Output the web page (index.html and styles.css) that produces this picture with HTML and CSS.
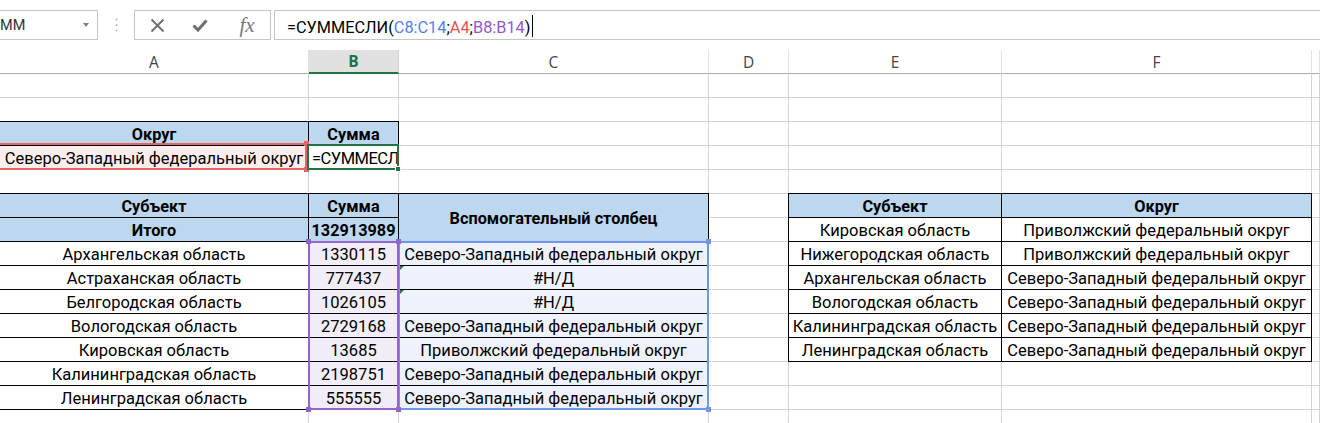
FILE: index.html
```html
<!DOCTYPE html>
<html lang="ru">
<head>
<meta charset="utf-8">
<title>СУММЕСЛИ</title>
<link rel="stylesheet" href="styles.css">
</head>
<body>
<div class="fbar">
  <div class="namebox"><span class="nb-text">ММ</span><span class="nb-arrow"></span></div>
  <div class="grip"><svg width="3" height="14" viewBox="0 0 3 14"><circle cx="1.5" cy="1.5" r="1" fill="#b4b4b4"/><circle cx="1.5" cy="7" r="1" fill="#b4b4b4"/><circle cx="1.5" cy="12.5" r="1" fill="#b4b4b4"/></svg></div>
  <div class="btns">
    <span class="btn b-x"><svg width="15" height="15" viewBox="0 0 15 15"><path d="M1.5 1.5L13.5 13.5M13.5 1.5L1.5 13.5" stroke="#707070" stroke-width="2" fill="none"/></svg></span>
    <span class="btn b-ok"><svg width="16" height="13" viewBox="0 0 16 13"><path d="M1.5 6.5L6 11L14.5 1.5" stroke="#6e6e6e" stroke-width="3" fill="none"/></svg></span>
    <span class="btn b-fx">fx</span>
  </div>
  <div class="formula"><span class="ftext">=СУММЕСЛИ(<span class="r-blue">C8:C14</span>;<span class="r-red">A4</span>;<span class="r-purple">B8:B14</span>)</span><span class="caret"></span></div>
</div>

<div class="sheetwrap">
  <div class="sheet">
    <div class="c ch">A</div><div class="c ch sel">B</div><div class="c ch">C</div><div class="c ch">D</div><div class="c ch">E</div><div class="c ch">F</div><div class="c ch"></div>

    <div class="c"></div><div class="c"></div><div class="c"></div><div class="c"></div><div class="c"></div><div class="c"></div><div class="c"></div>
    <div class="c"></div><div class="c"></div><div class="c"></div><div class="c"></div><div class="c"></div><div class="c"></div><div class="c"></div>

    <div class="c t th top">Округ</div><div class="c t th top">Сумма</div><div class="c"></div><div class="c"></div><div class="c"></div><div class="c"></div><div class="c"></div>

    <div class="c t fr">Северо-Западный федеральный округ</div>
    <div class="c t edit"><span class="etext">=СУММЕСЛ</span></div>
    <div class="c"></div><div class="c"></div><div class="c"></div><div class="c"></div><div class="c"></div>

    <div class="c"></div><div class="c"></div><div class="c"></div><div class="c"></div><div class="c"></div><div class="c"></div><div class="c"></div>

    <div class="c t th top">Субъект</div><div class="c t th top">Сумма</div><div class="c t th top span2">Вспомогательный столбец</div><div class="c"></div><div class="c t th top lft">Субъект</div><div class="c t th top">Округ</div><div class="c"></div>

    <div class="c t th">Итого</div><div class="c t th">132913989</div><div class="c"></div><div class="c t lft">Кировская область</div><div class="c t">Приволжский федеральный округ</div><div class="c"></div>

    <div class="c t">Архангельская область</div><div class="c t fp">1330115</div><div class="c t fb">Северо-Западный федеральный округ</div><div class="c"></div><div class="c t lft">Нижегородская область</div><div class="c t">Приволжский федеральный округ</div><div class="c"></div>

    <div class="c t">Астраханская область</div><div class="c t fp">777437</div><div class="c t fb err">#Н/Д</div><div class="c"></div><div class="c t lft">Архангельская область</div><div class="c t">Северо-Западный федеральный округ</div><div class="c"></div>

    <div class="c t">Белгородская область</div><div class="c t fp">1026105</div><div class="c t fb err">#Н/Д</div><div class="c"></div><div class="c t lft">Вологодская область</div><div class="c t">Северо-Западный федеральный округ</div><div class="c"></div>

    <div class="c t">Вологодская область</div><div class="c t fp">2729168</div><div class="c t fb">Северо-Западный федеральный округ</div><div class="c"></div><div class="c t lft">Калининградская область</div><div class="c t">Северо-Западный федеральный округ</div><div class="c"></div>

    <div class="c t">Кировская область</div><div class="c t fp">13685</div><div class="c t fb">Приволжский федеральный округ</div><div class="c"></div><div class="c t lft">Ленинградская область</div><div class="c t">Северо-Западный федеральный округ</div><div class="c"></div>

    <div class="c t">Калининградская область</div><div class="c t fp">2198751</div><div class="c t fb">Северо-Западный федеральный округ</div><div class="c"></div><div class="c"></div><div class="c"></div><div class="c"></div>

    <div class="c t">Ленинградская область</div><div class="c t fp">555555</div><div class="c t fb">Северо-Западный федеральный округ</div><div class="c"></div><div class="c"></div><div class="c"></div><div class="c"></div>

    <div class="c"></div><div class="c"></div><div class="c"></div><div class="c"></div><div class="c"></div><div class="c"></div><div class="c"></div>
  </div>

  <div class="marks">
    <div class="mk mk-red"><i class="h tl"></i><i class="h tr"></i><i class="h bl"></i><i class="h br"></i></div>
    <div class="mk mk-green"><i class="gh"></i></div>
    <div class="mk mk-blue"><i class="h tl"></i><i class="h tr"></i><i class="h bl"></i><i class="h br"></i></div>
    <div class="mk mk-purple"><i class="h tl"></i><i class="h tr"></i><i class="h bl"></i><i class="h br"></i></div>
  </div>
</div>
</body>
</html>
```

FILE: styles.css
```css
* { box-sizing: border-box; }
html, body { margin: 0; padding: 0; }
body {
  width: 1320px;
  height: 423px;
  overflow: hidden;
  background: #fff;
  color: #000;
  font-family: Roboto, "Liberation Sans", sans-serif;
}

/* ---------- formula bar ---------- */
.fbar {
  display: flex;
  height: 30px;
  margin-top: 10px;
}
.namebox {
  width: 100px;
  margin-left: -2px;
  border: 1px solid #c6c6c6;
  display: flex;
  align-items: center;
  justify-content: space-between;
  padding: 0 8px 0 1px;
  font-size: 14.5px;
  color: #333;
}
.nb-arrow {
  width: 0;
  height: 0;
  border-left: 3.5px solid transparent;
  border-right: 3.5px solid transparent;
  border-top: 4px solid #808080;
}
.grip {
  width: 36px;
  display: flex;
  align-items: center;
  justify-content: center;
  padding-left: 1px;
}
.btns {
  width: 137px;
  border: 1px solid #c6c6c6;
  display: flex;
}
.btn {
  display: flex;
  align-items: center;
  justify-content: center;
}
.b-x { width: 44px; }
.b-ok { width: 42px; }
.b-fx {
  width: 49px;
  padding-left: 3px;
  font-family: "Liberation Serif", "DejaVu Serif", serif;
  font-style: italic;
  font-size: 21px;
  color: #7a7a7a;
}
.formula {
  flex: 1;
  margin-left: 3px;
  margin-right: -2px;
  border: 1px solid #c6c6c6;
  display: flex;
  align-items: center;
  padding: 4px 0 0 12px;
  font-size: 16.3px;
  white-space: nowrap;
}
.r-blue { color: #4f82ea; }
.r-red { color: #ea4f4f; }
.r-purple { color: #9457cc; }
.caret {
  width: 1px;
  height: 22px;
  margin-left: 2px;
  margin-top: -2px;
  background: #000;
}

/* ---------- sheet ---------- */
.sheetwrap {
  display: grid;
  margin-top: 10px;
}
.sheet,
.marks {
  grid-area: 1 / 1;
  display: grid;
  grid-template-columns: 309px 90px 310px 80px 213px 310px 1fr;
  grid-template-rows: repeat(16, 24px);
}
.marks { pointer-events: none; }

.c {
  position: relative;
  display: flex;
  align-items: center;
  justify-content: center;
  padding-top: 1px;
  border-right: 1px solid #d4d4d4;
  border-bottom: 1px solid #d4d4d4;
  white-space: nowrap;
  overflow: hidden;
  font-size: 16.5px;
}
.ch {
  font-family: "Open Sans", "Noto Sans", sans-serif;
  font-size: 15.5px;
  color: #444;
  padding-top: 0;
  border-right-color: #e1e1e1;
  border-bottom-color: #ababab;
}
.ch.sel {
  background: #e1e1e1;
  color: #217346;
  font-weight: 700;
  border-bottom: 2px solid #217346;
  border-right-color: #d4d4d4;
}

.t {
  border-right-color: #000;
  border-bottom-color: #000;
}
.th {
  background: #bdd7ee;
  font-weight: 700;
  font-size: 16.3px;
}
.top { box-shadow: 0 -1px 0 #000; }
.lft { box-shadow: -1px 0 0 #000; }
.top.lft { box-shadow: 0 -1px 0 #000, -1px 0 0 #000, -1px -1px 0 #000; }
.span2 { grid-row: span 2; }

.fr { background: #fdeeee; }
.fb { background: #eef2fc; }
.fp { background: #f2eef9; }

.edit {
  justify-content: flex-start;
  padding-left: 3px;
}
.etext { letter-spacing: -0.5px; }
.err::before {
  content: "";
  position: absolute;
  left: 0;
  top: 0;
  width: 0;
  height: 0;
  border-top: 5px solid #207a3a;
  border-right: 5px solid transparent;
}

/* ---------- reference highlights ---------- */
.mk {
  position: relative;
  border: 2px solid;
}
.mk-red {
  grid-column: 1;
  grid-row: 5;
  margin: -3px 2px 0 -3px;
  border-color: #e86464;
  color: #e86464;
}
.mk-green {
  grid-column: 2;
  grid-row: 5;
  margin: -2px 0 0 -2px;
  border-color: #217346;
}
.mk-blue {
  grid-column: 3;
  grid-row: 9 / span 7;
  margin: -1px 0 0 -1px;
  border-color: #7096e8;
  color: #7096e8;
}
.mk-purple {
  grid-column: 2;
  grid-row: 9 / span 7;
  margin: -1px 0 0 -1px;
  border-color: #9165c9;
  color: #9165c9;
}
.h {
  position: absolute;
  width: 5px;
  height: 5px;
  background: currentColor;
}
.tl { left: -4px; top: -4px; }
.tr { right: -4px; top: -4px; }
.bl { left: -4px; bottom: -4px; }
.br { right: -4px; bottom: -4px; }
.gh {
  position: absolute;
  right: -4px;
  bottom: -4px;
  width: 6px;
  height: 6px;
  background: #217346;
  border: 1px solid #fff;
}
```
